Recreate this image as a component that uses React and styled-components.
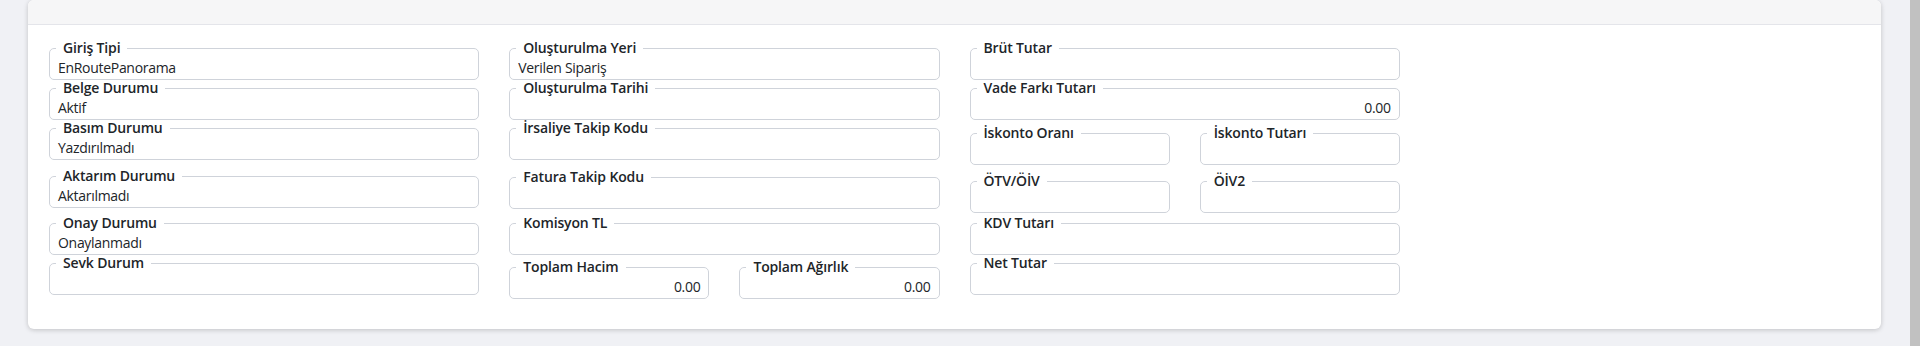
import React from 'react';
import styled, { createGlobalStyle } from 'styled-components';

const GlobalStyle = createGlobalStyle`
  html, body {
    margin: 0;
    padding: 0;
    background: #f0f1f5;
  }
  body {
    font-family: "Open Sans", "Noto Sans", "Liberation Sans", sans-serif;
    color: #212529;
    overflow: hidden;
  }
  * { box-sizing: border-box; }
`;

const Page = styled.div`
  display: flex;
  height: 346px;
  background: #f0f1f5;
`;

const Main = styled.main`
  flex: 1;
  min-width: 0;
  padding: 0 29px 0 28px;
`;

const ScrollThumb = styled.div`
  width: 10px;
  flex: none;
  background: #c1c1c1;
`;

const Card = styled.section`
  background: #fff;
  border-radius: 6px;
  box-shadow: 0 1px 5px rgba(0, 0, 0, 0.2);
  overflow: hidden;
`;

const CardHeader = styled.div`
  height: 25px;
  background: #f6f6f7;
  border-bottom: 1px solid #e4e5ea;
`;

const CardBody = styled.div`
  display: grid;
  grid-template-columns: repeat(4, 1fr);
  column-gap: 30px;
  align-items: start;
  padding: 15px 21px 30px;
`;

const Column = styled.div`
  display: flex;
  flex-direction: column;
  min-width: 0;
`;

const Pair = styled.div`
  display: grid;
  grid-template-columns: 1fr 1fr;
  column-gap: 30px;
  margin-top: ${(p) => p.$mt || 0}px;
`;

const Field = styled.fieldset`
  margin: ${(p) => p.$mt || 0}px 0 0;
  min-width: 0;
  border: 1px solid #cfd3da;
  border-radius: 5px;
  padding: 0 8px;
`;

const Legend = styled.legend`
  margin-left: -2px;
  padding: 0 7px;
  font-size: 14px;
  line-height: 16px;
  font-weight: 600;
  letter-spacing: -0.15px;
  color: #212529;
  white-space: nowrap;
`;

const Value = styled.div`
  padding: 2px 0 1px;
  min-height: 23px;
  font-size: 14px;
  line-height: 20px;
  letter-spacing: -0.3px;
  color: #212529;
  text-align: ${(p) => (p.$right ? 'right' : 'left')};
  white-space: nowrap;
`;

function FormField({ label, value, right, mt }) {
  return (
    <Field $mt={mt}>
      <Legend>{label}</Legend>
      <Value $right={right}>{value}</Value>
    </Field>
  );
}

export default function App() {
  return (
    <>
      <GlobalStyle />
      <Page>
        <Main>
          <Card>
            <CardHeader />
            <CardBody>
              <Column>
                <FormField label="Giriş Tipi" value="EnRoutePanorama" />
                <FormField label="Belge Durumu" value="Aktif" />
                <FormField label="Basım Durumu" value="Yazdırılmadı" />
                <FormField label="Aktarım Durumu" value="Aktarılmadı" mt={8} />
                <FormField label="Onay Durumu" value="Onaylanmadı" mt={7} />
                <FormField label="Sevk Durum" value="" />
              </Column>
              <Column>
                <FormField label="Oluşturulma Yeri" value="Verilen Sipariş" />
                <FormField label="Oluşturulma Tarihi" value="" />
                <FormField label="İrsaliye Takip Kodu" value="" />
                <FormField label="Fatura Takip Kodu" value="" mt={9} />
                <FormField label="Komisyon TL" value="" mt={6} />
                <Pair $mt={4}>
                  <FormField label="Toplam Hacim" value="0.00" right />
                  <FormField label="Toplam Ağırlık" value="0.00" right />
                </Pair>
              </Column>
              <Column>
                <FormField label="Brüt Tutar" value="" />
                <FormField label="Vade Farkı Tutarı" value="0.00" right />
                <Pair $mt={5}>
                  <FormField label="İskonto Oranı" value="" />
                  <FormField label="İskonto Tutarı" value="" />
                </Pair>
                <Pair $mt={8}>
                  <FormField label="ÖTV/ÖİV" value="" />
                  <FormField label="ÖİV2" value="" />
                </Pair>
                <FormField label="KDV Tutarı" value="" mt={2} />
                <FormField label="Net Tutar" value="" />
              </Column>
              <Column />
            </CardBody>
          </Card>
        </Main>
        <ScrollThumb />
      </Page>
    </>
  );
}
